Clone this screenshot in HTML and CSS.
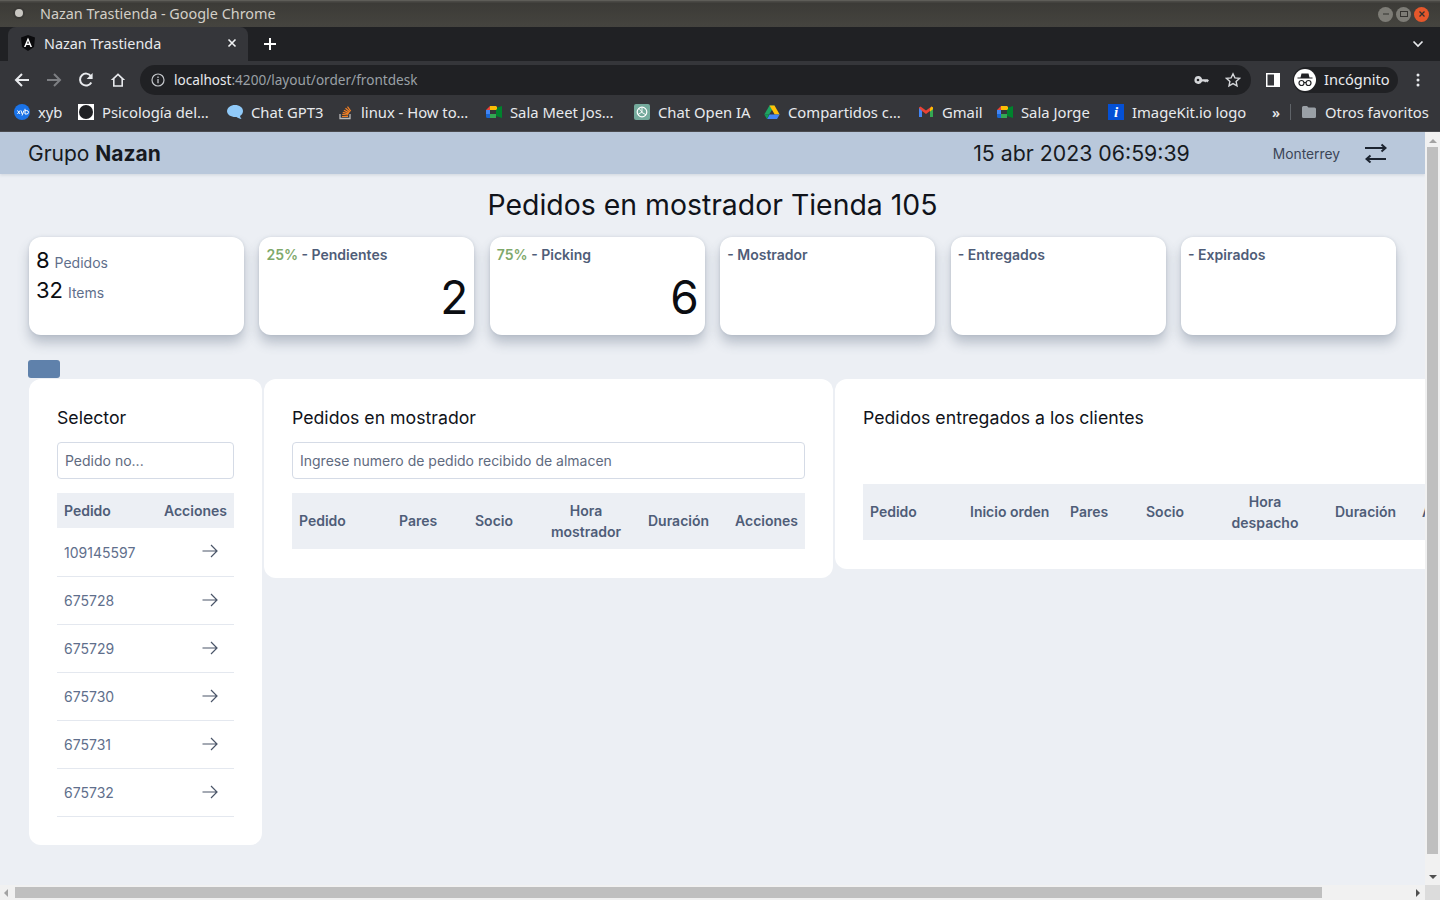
FILE: index.html
```html
<!DOCTYPE html>
<html lang="en">
<head>
    <meta charset="UTF-8">
    <title>Nazan Trastienda - Google Chrome</title>
    <link rel="stylesheet" href="styles.css">
</head>
<body>
    <div class="titlebar">
        <span class="window-dot"></span>
        <span class="window-title">Nazan Trastienda - Google Chrome</span>
        <div class="window-buttons">
            <span class="win-btn"><svg width="10" height="10" viewBox="0 0 10 10"><path d="M2 5h6" stroke="#33322f" stroke-width="1"/></svg></span>
            <span class="win-btn"><svg width="10" height="10" viewBox="0 0 10 10"><rect x="1.5" y="2.5" width="7" height="5" fill="none" stroke="#33322f"/></svg></span>
            <span class="win-btn win-close"><svg width="10" height="10" viewBox="0 0 10 10"><path d="M2.5 2.5l5 5M7.5 2.5l-5 5" stroke="#33322f" stroke-width="1.3"/></svg></span>
        </div>
    </div>

    <div class="tabstrip">
        <div class="tab">
            <svg class="tab-icon" width="16" height="16" viewBox="0 0 16 16"><path d="M8 0L1 2.5l1 9.5L8 16l6-4 1-9.5z" fill="#0b0b0d"/><path d="M8 2.5L4 12h1.6l.8-2h3.2l.8 2H12zM7 8.6L8 6l1 2.6z" fill="#fff"/></svg>
            <span class="tab-title">Nazan Trastienda</span>
            <svg class="tab-close" width="10" height="10" viewBox="0 0 10 10"><path d="M1.5 1.5l7 7M8.5 1.5l-7 7" stroke="#f1f3f4" stroke-width="1.6"/></svg>
        </div>
        <svg class="new-tab" width="12" height="12" viewBox="0 0 12 12"><path d="M6 0v12M0 6h12" stroke="#fff" stroke-width="2"/></svg>
        <svg class="tab-list" width="12" height="8" viewBox="0 0 12 8"><path d="M1.5 1.500L6 6l4.500-4.500" fill="none" stroke="#e8eaed" stroke-width="1.700"/></svg>
    </div>

    <div class="toolbar">
        <svg class="nav-btn" width="16" height="16" viewBox="0 0 16 16"><path d="M15 8H2M8 2L2 8l6 6" fill="none" stroke="#e8eaed" stroke-width="2"/></svg>
        <svg class="nav-btn" width="16" height="16" viewBox="0 0 16 16"><path d="M1 8h13M8 2l6 6-6 6" fill="none" stroke="#7d7f83" stroke-width="2"/></svg>
        <svg class="nav-btn" width="16" height="16" viewBox="0 0 16 16"><path d="M13.300 10.500A6 6 0 1 1 13 4.200" fill="none" stroke="#e8eaed" stroke-width="2"/><path d="M14.600 1v6h-6z" fill="#e8eaed"/></svg>
        <svg class="nav-btn" width="16" height="16" viewBox="0 0 16 16"><path d="M8 1.200L.8 8H3v6.800h10V8h2.200zM4.600 13.200V6.800L8 3.600l3.400 3.200v6.400z" fill="#e8eaed"/></svg>
        <div class="omnibox">
            <svg width="14" height="14" viewBox="0 0 14 14"><circle cx="7" cy="7" r="6" fill="none" stroke="#c4c7cb" stroke-width="1.200"/><path d="M7 6v4.200M7 3.600v1.300" stroke="#c4c7cb" stroke-width="1.300"/></svg>
            <span class="url"><span class="url-host">localhost</span>:4200/layout/order/frontdesk</span>
            <svg class="omni-key" width="16" height="10" viewBox="0 0 16 10"><path d="M4.500 1a4 4 0 1 0 3.600 5.600h2.100l1 1 1-1 1 1 1.800-2-1.300-1.400H8.100A4 4 0 0 0 4.500 1z" fill="#d5d7da"/><circle cx="4" cy="5" r="1.300" fill="#202124"/></svg>
            <svg width="16" height="16" viewBox="0 0 16 16"><path d="M8 1.800l1.900 4.100 4.500.5-3.300 3 .9 4.400L8 11.600l-4 2.200.9-4.400-3.300-3 4.500-.5z" fill="none" stroke="#d5d7da" stroke-width="1.400"/></svg>
        </div>
        <svg class="side-panel" width="14" height="14" viewBox="0 0 14 14"><rect width="14" height="14" fill="#fff"/><rect x="1.500" y="1.500" width="6.500" height="11" fill="#35363a"/></svg>
        <div class="profile">
            <span class="avatar">
                <svg width="16" height="14" viewBox="0 0 16 14"><path d="M4.500 0.500h7l1 4h3v1H.5v-1h3z" fill="#202124"/><circle cx="4.500" cy="10" r="2.500" fill="none" stroke="#202124" stroke-width="1.200"/><circle cx="11.500" cy="10" r="2.500" fill="none" stroke="#202124" stroke-width="1.200"/><path d="M7 9.500h2" stroke="#202124"/></svg>
            </span>
            <span class="profile-name">Incógnito</span>
        </div>
        <svg class="menu-dots" width="4" height="14" viewBox="0 0 4 14"><circle cx="2" cy="2" r="1.500" fill="#e8eaed"/><circle cx="2" cy="7" r="1.500" fill="#e8eaed"/><circle cx="2" cy="12" r="1.500" fill="#e8eaed"/></svg>
    </div>

    <div class="bookmarks">
        <a class="bookmark">
            <svg width="16" height="16" viewBox="0 0 16 16"><circle cx="8" cy="8" r="8" fill="#1a73e8"/><path d="M3.500 6.500l2.500 3.500M6 6.500L3.500 10M7 6.500l1.200 3.500M10 6.500L8 11.500M11 4.800v5.200h1.800a1.700 1.700 0 0 0 0-3.400H11" fill="none" stroke="#fff" stroke-width="1"/></svg>
            <span class="bm-label">xyb</span>
        </a>
        <a class="bookmark">
            <svg width="16" height="16" viewBox="0 0 16 16"><rect width="16" height="16" fill="#fff"/><circle cx="8" cy="8" r="7" fill="#202124"/></svg>
            <span class="bm-label">Psicología del…</span>
        </a>
        <a class="bookmark">
            <svg width="16" height="16" viewBox="0 0 16 16"><path d="M8 1c4.400 0 8 2.500 8 6 0 2.200-1.200 3.900-3 5 .2 1 .7 2 1.500 3-1.800-.3-3.600-1-5-2-5 .4-9.500-2-9.500-6C.5 3.500 3.600 1 8 1z" fill="#90caf9"/></svg>
            <span class="bm-label">Chat GPT3</span>
        </a>
        <a class="bookmark">
            <svg width="16" height="16" viewBox="0 0 16 16"><path d="M3 10v4.500h10V10" fill="none" stroke="#bcbbbb" stroke-width="1.300"/><path d="M5 12.500h6M5.200 10.400l5.900.6M5.800 8.300l5.700 1.500M6.900 6.200l5.200 2.700M8.500 4.300l4.400 3.700M10.500 2.700l3.200 4.500" stroke="#f48024" stroke-width="1.200"/></svg>
            <span class="bm-label">linux - How to…</span>
        </a>
        <a class="bookmark">
            <svg width="16" height="16" viewBox="0 0 16 16"><path d="M4 2h6v4H4z" fill="#fbbc04"/><path d="M4 2L0 6h4z" fill="#ea4335"/><path d="M0 6h4v4H0z" fill="#4285f4"/><path d="M0 10h4v4H1.500A1.500 1.500 0 0 1 0 12.500z" fill="#1967d2"/><path d="M4 10h6v4H4z" fill="#34a853"/><path d="M10 4v8l6 2V2z" fill="#00832d"/><path d="M10 2v4l1-1V3z" fill="#fbbc04"/></svg>
            <span class="bm-label">Sala Meet Jos…</span>
        </a>
        <a class="bookmark">
            <svg width="16" height="16" viewBox="0 0 16 16"><rect width="16" height="16" rx="2" fill="#74aa9c"/><circle cx="8" cy="8" r="4.800" fill="none" stroke="#fff" stroke-width="1.200"/><path d="M8 3.500v5l4 2.300M4 10.500l4-2.500M5 4.500l3 3.500" fill="none" stroke="#fff" stroke-width=".9"/></svg>
            <span class="bm-label">Chat Open IA</span>
        </a>
        <a class="bookmark">
            <svg width="16" height="16" viewBox="0 0 16 16"><path d="M5.500 1.500h5L5.200 10.500H.3z" fill="#1fa463"/><path d="M10.500 1.500l5.200 9h-5L5.500 1.500z" fill="#ffc107"/><path d="M3 15l2.500-4.500h10.200L13 15z" fill="#4285f4"/><path d="M.3 10.500h4.900L3 15z" fill="#0f9d58"/></svg>
            <span class="bm-label">Compartidos c…</span>
        </a>
        <a class="bookmark">
            <svg width="16" height="16" viewBox="0 0 16 16"><path d="M1 3.500v9.500h3V7l4 3 4-3v6h3V3.500L13.500 2.500 8 6.500 2.500 2.500z" fill="#ea4335"/><path d="M1 4v9h3V7z" fill="#4285f4"/><path d="M12 7v6h3V4z" fill="#34a853"/><path d="M15 3.500v1.800l-3 2.200V4.500l1.500-2z" fill="#fbbc04"/></svg>
            <span class="bm-label">Gmail</span>
        </a>
        <a class="bookmark">
            <svg width="16" height="16" viewBox="0 0 16 16"><path d="M4 2h6v4H4z" fill="#fbbc04"/><path d="M4 2L0 6h4z" fill="#ea4335"/><path d="M0 6h4v4H0z" fill="#4285f4"/><path d="M0 10h4v4H1.500A1.500 1.500 0 0 1 0 12.500z" fill="#1967d2"/><path d="M4 10h6v4H4z" fill="#34a853"/><path d="M10 4v8l6 2V2z" fill="#00832d"/><path d="M10 2v4l1-1V3z" fill="#fbbc04"/></svg>
            <span class="bm-label">Sala Jorge</span>
        </a>
        <a class="bookmark">
            <span class="imagekit-icon">i</span>
            <span class="bm-label">ImageKit.io logo</span>
        </a>
        <span class="bm-more">»</span>
        <span class="bm-divider"></span>
        <a class="bookmark bookmark-other">
            <svg width="14" height="12" viewBox="0 0 14 12"><path d="M0 1.500A1.500 1.500 0 0 1 1.500 0H5l1.500 1.500h6A1.500 1.500 0 0 1 14 3v7.500a1.500 1.500 0 0 1-1.500 1.500h-11A1.500 1.500 0 0 1 0 10.500z" fill="#9aa0a6"/></svg>
            <span class="bm-label">Otros favoritos</span>
        </a>
    </div>

    <div class="viewport">
        <div class="viewport-row">
            <div class="page">
                <header class="app-header">
                    <div class="brand">Grupo <b>Nazan</b></div>
                    <div class="clock">15 abr 2023 06:59:39</div>
                    <div class="city">Monterrey</div>
                    <svg class="swap-icon" width="22" height="20" viewBox="0 0 22 20"><path d="M0 5h20.500M16.500 1.500L20.500 5l-4 3.500M21 16H1.500M5.500 12.500L1.500 16l4 3.500" fill="none" stroke="#1c2430" stroke-width="2"/></svg>
                </header>

                <h1 class="page-title">Pedidos en mostrador Tienda 105</h1>

                <section class="stats">
                    <div class="stat-card stat-total">
                        <div class="total-line"><span class="total-num">8</span> Pedidos</div>
                        <div class="total-line"><span class="total-num">32</span> Items</div>
                    </div>
                    <div class="stat-card">
                        <div class="stat-label"><span class="pct">25%</span> - Pendientes</div>
                        <div class="stat-value">2</div>
                    </div>
                    <div class="stat-card">
                        <div class="stat-label"><span class="pct">75%</span> - Picking</div>
                        <div class="stat-value">6</div>
                    </div>
                    <div class="stat-card">
                        <div class="stat-label">- Mostrador</div>
                    </div>
                    <div class="stat-card">
                        <div class="stat-label">- Entregados</div>
                    </div>
                    <div class="stat-card">
                        <div class="stat-label">- Expirados</div>
                    </div>
                </section>

                <button class="toggle-btn" type="button"></button>

                <section class="panels">
                    <div class="panel panel-selector">
                        <h2>Selector</h2>
                        <input class="field" type="text" placeholder="Pedido no...">
                        <table class="grid">
                            <thead>
                                <tr><th>Pedido</th><th class="right">Acciones</th></tr>
                            </thead>
                            <tbody id="selector-rows"></tbody>
                        </table>
                    </div>

                    <div class="panel panel-counter">
                        <h2>Pedidos en mostrador</h2>
                        <input class="field" type="text" placeholder="Ingrese numero de pedido recibido de almacen">
                        <table class="grid grid-fixed">
                            <colgroup>
                                <col class="w100"><col class="w76"><col class="w63"><col class="w110"><col class="w87"><col class="w77">
                            </colgroup>
                            <thead>
                                <tr><th>Pedido</th><th>Pares</th><th>Socio</th><th class="center">Hora<br>mostrador</th><th>Duración</th><th>Acciones</th></tr>
                            </thead>
                        </table>
                    </div>

                    <div class="panel panel-delivered">
                        <h2>Pedidos entregados a los clientes</h2>
                        <table class="grid grid-fixed">
                            <colgroup>
                                <col class="w100"><col class="w100"><col class="w76"><col class="w63"><col class="w126"><col class="w87"><col class="w77">
                            </colgroup>
                            <thead>
                                <tr><th>Pedido</th><th>Inicio orden</th><th>Pares</th><th>Socio</th><th class="center">Hora<br>despacho</th><th>Duración</th><th>Acciones</th></tr>
                            </thead>
                        </table>
                    </div>
                </section>
            </div>

            <div class="vscroll">
                <span class="arrow arrow-up"></span>
                <span class="vthumb"></span>
                <span class="arrow arrow-down"></span>
            </div>
        </div>
        <div class="hscroll">
            <span class="arrow arrow-left"></span>
            <span class="hthumb"></span>
            <span class="arrow arrow-right"></span>
            <span class="corner"></span>
        </div>
    </div>

    <script>
        const pedidos = ["109145597", "675728", "675729", "675730", "675731", "675732"];

        function displayPedidos() {
            const rows = document.getElementById("selector-rows");
            pedidos.forEach(pedido => {
                const row = document.createElement("tr");
                row.innerHTML = `<td>${pedido}</td><td class="action"><svg width="16" height="14" viewBox="0 0 16 14"><path d="M.5 7h14.500M9 1l6 6-6 6" fill="none" stroke="#4a5568" stroke-width="1.200"/></svg></td>`;
                rows.appendChild(row);
            });
        }

        document.addEventListener("DOMContentLoaded", displayPedidos);
    </script>
</body>
</html>
```

FILE: styles.css
```css
* {
    box-sizing: border-box;
}
html, body {
    margin: 0;
    height: 100%;
    overflow: hidden;
}
body {
    display: flex;
    flex-direction: column;
    width: 1440px;
    height: 900px;
    font-family: Inter, "Noto Sans", sans-serif;
    background: #eceff4;
}

/* browser chrome */
.titlebar {
    height: 27px;
    display: flex;
    align-items: center;
    padding: 0 11px 2px 15px;
    background: linear-gradient(#4a4945 0, #4a4945 1px, #3c3b37 2px, #45443f 100%);
    border-top: 1px solid #5e5d58;
    font-family: "Noto Sans", sans-serif;
    font-size: 14.4px;
    color: #d3cfc8;
}
.window-dot {
    width: 8px;
    height: 8px;
    margin-right: 17px;
    border-radius: 50%;
    background: #c9c7c2;
    box-shadow: 0 0 0 2px #3a3936;
}
.window-buttons {
    display: flex;
    gap: 3px;
    margin: 2px 0 0 auto;
}
.win-btn {
    width: 15px;
    height: 15px;
    display: flex;
    align-items: center;
    justify-content: center;
    border-radius: 50%;
    background: #7d7c76;
}
.win-close {
    background: #e5572b;
}
.tabstrip {
    height: 34px;
    display: flex;
    align-items: center;
    padding-left: 8px;
    background: #202124;
}
.tab {
    width: 240px;
    height: 34px;
    display: flex;
    align-items: center;
    padding: 0 11px 2px 12px;
    background: #35363a;
    border-radius: 8px 8px 0 0;
    font-family: "Noto Sans", sans-serif;
    font-size: 14.4px;
    color: #e8eaed;
}
.tab-icon {
    margin-right: 8px;
}
.tab-close {
    margin-left: auto;
}
.new-tab {
    margin-left: 16px;
}
.tab-list {
    margin-left: auto;
    margin-right: 16px;
}
.toolbar {
    height: 36px;
    display: flex;
    align-items: center;
    padding: 2px 0 0 14px;
    background: #35363a;
}
.nav-btn {
    margin-right: 16px;
}
.omnibox {
    width: 1111px;
    height: 30px;
    display: flex;
    align-items: center;
    gap: 9px;
    margin-left: -2px;
    padding: 0 10px 0 11px;
    border-radius: 15px;
    background: #202124;
}
.url {
    margin-bottom: 2px;
    font-family: "Noto Sans", sans-serif;
    font-size: 13.6px;
    color: #9aa0a6;
}
.url-host {
    color: #e8eaed;
}
.omni-key {
    margin-left: auto;
    margin-right: 6px;
}
.side-panel {
    margin-left: 15px;
}
.profile {
    width: 105px;
    height: 26px;
    display: flex;
    align-items: center;
    gap: 8px;
    margin-left: 13px;
    padding-left: 1px;
    border-radius: 13px;
    background: #202124;
    font-family: "Noto Sans", sans-serif;
    font-size: 14.6px;
    color: #e8eaed;
}
.profile-name {
    margin-bottom: 2px;
}
.avatar {
    width: 22px;
    height: 22px;
    display: flex;
    align-items: center;
    justify-content: center;
    border-radius: 50%;
    background: #fff;
}
.menu-dots {
    margin-left: 18px;
}
.bookmarks {
    height: 35px;
    display: grid;
    grid-template-columns: 64px 149px 110px 149px 148px 130px 154px 79px 111px 164px 18px 1px auto;
    align-items: center;
    padding: 0 0 4px 14px;
    background: #35363a;
    border-bottom: 1px solid #4a4b4f;
    font-family: "Noto Sans", sans-serif;
    font-size: 14.8px;
    color: #e8eaed;
}
.bookmark {
    display: flex;
    align-items: center;
    gap: 8px;
    white-space: nowrap;
}
.imagekit-icon {
    width: 16px;
    height: 16px;
    background: #0450d5;
    color: #fff;
    font-family: "Liberation Serif", serif;
    font-style: italic;
    font-weight: bold;
    font-size: 15px;
    line-height: 16px;
    text-align: center;
}
.bm-more {
    font-size: 14px;
    font-weight: 600;
}
.bm-divider {
    width: 1px;
    height: 16px;
    background: #5f6368;
}
.bookmark-other {
    gap: 9px;
    margin-left: 11px;
}

/* page */
.viewport {
    flex: 1;
    min-height: 0;
    display: flex;
    flex-direction: column;
}
.viewport-row {
    flex: 1;
    min-height: 0;
    display: flex;
}
.page {
    flex: 1;
    min-width: 0;
    overflow: hidden;
    background: #eceff4;
}
.app-header {
    height: 42px;
    display: flex;
    align-items: center;
    padding: 0 38px 0 28px;
    background: #b9c8db;
    box-shadow: 0 1px 3px rgba(90, 105, 130, .2);
    color: #171a21;
}
.brand {
    font-size: 21px;
}
.brand b {
    font-weight: 700;
}
.clock {
    margin-left: auto;
    font-size: 21.3px;
}
.city {
    margin-left: 83px;
    padding-top: 2px;
    font-size: 13.8px;
    color: #3b4557;
}
.swap-icon {
    margin-left: 25px;
}
.page-title {
    margin: 14px 0 16px;
    font-size: 28.4px;
    line-height: 33px;
    font-weight: 400;
    text-align: center;
    color: #10131a;
}
.stats {
    display: grid;
    grid-template-columns: repeat(6, 1fr);
    gap: 15.5px;
    padding: 0 29px;
}
.stat-card {
    height: 98px;
    padding: 9px 6px 9px 7px;
    border-radius: 12px;
    background: #fff;
    box-shadow: 0 8px 12px rgba(70, 85, 110, .3), 0 0 3px rgba(70, 85, 110, .15);
}
.stat-label {
    font-size: 14px;
    line-height: 18px;
    font-weight: 600;
    color: #4f5d78;
}
.pct {
    color: #7fa96b;
}
.stat-value {
    margin-top: 8px;
    font-size: 46px;
    line-height: 50px;
    text-align: right;
    color: #0b0d12;
}
.total-line {
    font-size: 14px;
    line-height: 29px;
    color: #5f6f8c;
}
.total-num {
    margin-right: 1px;
    font-size: 22px;
    color: #0b0d12;
}
.stat-total {
    padding: 9px 7px;
}
.stat-total .total-line + .total-line {
    margin-top: -1px;
}
.toggle-btn {
    display: block;
    width: 32px;
    height: 18px;
    margin: 25px 0 1px 28px;
    padding: 0;
    border: 0;
    border-radius: 3px;
    background: #5f81ab;
}
.panels {
    display: flex;
    align-items: flex-start;
    gap: 2px;
    width: 1521px;
    padding-left: 29px;
}
.panel {
    flex: none;
    padding: 28px 28px 29px;
    border-radius: 12px;
    background: #fff;
}
.panel h2 {
    margin: 0 0 13px;
    font-size: 17.7px;
    line-height: 22px;
    font-weight: 400;
    color: #10131a;
}
.panel-selector {
    width: 233px;
    padding-bottom: 28px;
}
.panel-counter {
    width: 569px;
}
.panel-delivered {
    width: 685px;
    flex: none;
    margin-bottom: 9px;
}
.panel-delivered h2 {
    margin-bottom: 55px;
}
.field {
    display: block;
    width: 100%;
    height: 37px;
    margin-bottom: 14px;
    padding: 0 7px;
    border: 1px solid #d5dbe6;
    border-radius: 4px;
    background: #fff;
    font-family: Inter, sans-serif;
    font-size: 14px;
    color: #3c4658;
}
.field::placeholder {
    color: #5f6b7f;
    opacity: 1;
}
.grid {
    width: 100%;
    border-collapse: collapse;
    font-size: 14px;
}
.grid-fixed {
    table-layout: fixed;
}
.grid th {
    height: 35px;
    padding: 0 7px;
    background: #eceff4;
    font-weight: 600;
    line-height: 21px;
    text-align: left;
    color: #4f5d78;
}
.grid-fixed th {
    height: 56px;
    padding-bottom: 2px;
}
.grid th.right {
    text-align: right;
}
.grid th.center {
    padding-bottom: 0;
    text-align: center;
}
.grid td {
    height: 48px;
    padding: 1px 7px 0;
    border-bottom: 1px solid #e4e8ef;
    color: #5f6f8c;
}
.grid td.action {
    padding: 0 16px 0 7px;
    text-align: right;
}
.grid td svg {
    display: inline-block;
    vertical-align: -1px;
}
.w63 { width: 63px; }
.w76 { width: 76px; }
.w77 { width: 77px; }
.w87 { width: 87px; }
.w100 { width: 100px; }
.w110 { width: 110px; }
.w126 { width: 126px; }

/* scrollbars */
.vscroll {
    width: 15px;
    flex: none;
    display: flex;
    flex-direction: column;
    align-items: center;
    background: #f1f1f1;
}
.vthumb {
    width: 11px;
    height: 707px;
    margin: 4px 0 21px;
    background: #bfbfbf;
}
.hscroll {
    height: 15px;
    flex: none;
    display: flex;
    align-items: center;
    background: #f1f1f1;
}
.hthumb {
    width: 1307px;
    height: 11px;
    margin-left: 7px;
    background: #bfbfbf;
}
.arrow {
    width: 0;
    height: 0;
    flex: none;
    border: 4px solid transparent;
}
.arrow-up {
    margin-top: 7px;
    border-top: 0;
    border-bottom: 4px solid #a3a3a3;
}
.arrow-down {
    border-bottom: 0;
    border-top: 4px solid #505050;
}
.arrow-left {
    margin-left: 4px;
    border-left: 0;
    border-right: 4px solid #a3a3a3;
}
.arrow-right {
    margin-left: 94px;
    border-right: 0;
    border-left: 4px solid #505050;
}
.corner {
    width: 15px;
    height: 15px;
    margin-left: auto;
    background: #dcdcdc;
}
```
